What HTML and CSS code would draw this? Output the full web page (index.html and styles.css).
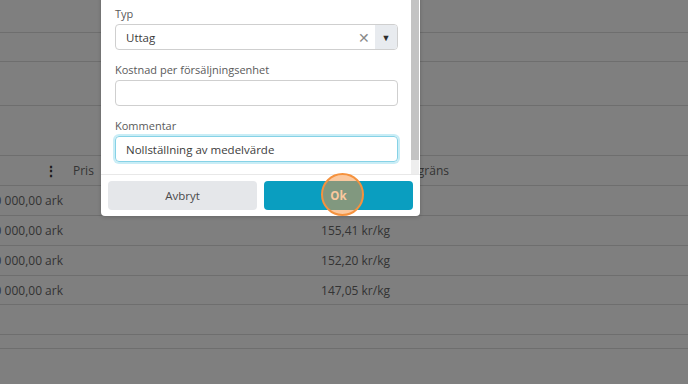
FILE: index.html
```html
<!DOCTYPE html>
<html>
  <head>
    <link rel="stylesheet" href="styles.css">
  </head>
  <body>
    <div class="page">
      <div class="row r33"></div>
      <div class="row r29"></div>
      <div class="row r44"></div>
      <div class="row r50"></div>
      <div class="row head">
        <div class="qty"><span class="kebab">&#8942;</span></div>
        <div class="price">Pris</div>
        <div class="limit">Beställningsgräns</div>
      </div>
      <div class="row data">
        <div class="qty">10 000,00 ark</div>
        <div class="price">158,12 kr/kg</div>
        <div class="limit"></div>
      </div>
      <div class="row data">
        <div class="qty">10 000,00 ark</div>
        <div class="price">155,41 kr/kg</div>
        <div class="limit"></div>
      </div>
      <div class="row data">
        <div class="qty">10 000,00 ark</div>
        <div class="price">152,20 kr/kg</div>
        <div class="limit"></div>
      </div>
      <div class="row data r29">
        <div class="qty">10 000,00 ark</div>
        <div class="price">147,05 kr/kg</div>
        <div class="limit"></div>
      </div>
      <div class="row r30"></div>
      <div class="row r14"></div>
    </div>

    <div class="overlay"></div>

    <div class="modal">
      <div class="modal-main">
        <div class="modal-body">
          <div class="field">
            <label>Typ</label>
            <div class="select">
              <span class="select-value">Uttag</span>
              <span class="select-clear">&#x2715;</span>
              <span class="select-arrow">&#9660;</span>
            </div>
          </div>
          <div class="field">
            <label>Kostnad per försäljningsenhet</label>
            <div class="input"></div>
          </div>
          <div class="field">
            <label>Kommentar</label>
            <div class="input focus">Nollställning av medelvärde</div>
          </div>
        </div>
        <div class="scrollbar"><div class="thumb"></div></div>
      </div>
      <div class="modal-footer">
        <button class="btn cancel">Avbryt</button>
        <button class="btn ok">Ok</button>
      </div>
    </div>

    <div class="click-dot"></div>
  </body>
</html>
```

FILE: styles.css
```css
* {
  box-sizing: border-box;
}

body {
  margin: 0;
  background: #ffffff;
  font-family: "Open Sans", "Noto Sans", sans-serif;
  overflow: hidden;
}

.page {
  width: 688px;
}

.row {
  display: flex;
  align-items: center;
  height: 30px;
  border-bottom: 1px solid #dcdcdc;
  font-size: 12px;
  color: #686868;
}

.r33 { height: 33px; }
.r29 { height: 29px; }
.r44 { height: 44px; }
.r50 { height: 50px; }
.r30 { height: 30px; }
.r14 { height: 14px; }

.qty {
  width: 63px;
  flex-shrink: 0;
  display: flex;
  justify-content: flex-end;
  white-space: nowrap;
}

.price {
  width: 327px;
  flex-shrink: 0;
  display: flex;
  justify-content: flex-end;
  white-space: nowrap;
}

.limit {
  width: 59px;
  flex-shrink: 0;
  display: flex;
  justify-content: flex-end;
  white-space: nowrap;
}

.head .qty {
  padding-right: 5px;
}

.head .price {
  justify-content: flex-start;
  padding-left: 10px;
}

.kebab {
  font-size: 14px;
  font-weight: bold;
  color: #333;
}

.overlay {
  position: absolute;
  top: 0;
  left: 0;
  right: 0;
  bottom: 0;
  background: rgba(0, 0, 0, 0.5);
}

.modal {
  position: absolute;
  left: 101px;
  top: -8px;
  width: 319px;
  background: #fff;
  border-radius: 4px;
  box-shadow: 0 1px 4px rgba(0, 0, 0, 0.2);
}

.modal-main {
  display: flex;
  height: 182px;
}

.modal-body {
  flex: 1;
  padding: 14px 13px 0 14px;
  display: flex;
  flex-direction: column;
  gap: 12px;
}

.field label {
  display: block;
  font-size: 11px;
  line-height: 16px;
  margin-bottom: 2px;
  color: #5a5a5a;
}

.select,
.input {
  height: 26px;
  border: 1px solid #cfcfcf;
  border-radius: 4px;
  font-size: 11.5px;
  color: #3c3c3c;
  display: flex;
  align-items: center;
  padding-left: 10px;
}

.select {
  padding-left: 0;
}

.select-value {
  flex: 1;
  padding-left: 10px;
}

.select-clear {
  color: #8a8a8a;
  font-size: 14px;
  width: 22px;
  text-align: center;
}

.select-arrow {
  width: 22px;
  align-self: stretch;
  display: flex;
  align-items: center;
  justify-content: center;
  background: #e8ebef;
  border-radius: 0 3px 3px 0;
  font-size: 9px;
  color: #2d2d2d;
}

.input.focus {
  border-color: #86d2e6;
  box-shadow: 0 0 0 2px #c9edf6;
}

.scrollbar {
  width: 8px;
  margin-right: 1px;
  background: #eeeeee;
}

.thumb {
  height: 168px;
  background: #c3c3c3;
}

.modal-footer {
  display: flex;
  gap: 7px;
  padding: 6px 7px;
  border-top: 1px solid #e8e8e8;
}

.btn {
  flex: 1;
  height: 29px;
  border: none;
  border-radius: 4px;
  font-family: "Open Sans", "Noto Sans", sans-serif;
  font-size: 11.5px;
  padding-bottom: 2px;
}

.cancel {
  background: #e5e7ea;
  color: #4a4a4a;
}

.ok {
  background: #0a9ec0;
  color: #ffffff;
  font-weight: bold;
}

.click-dot {
  position: absolute;
  left: 321px;
  top: 173px;
  width: 43px;
  height: 43px;
  border-radius: 50%;
  border: 2px solid #f5923e;
  background: rgba(247, 146, 62, 0.5);
}
```
